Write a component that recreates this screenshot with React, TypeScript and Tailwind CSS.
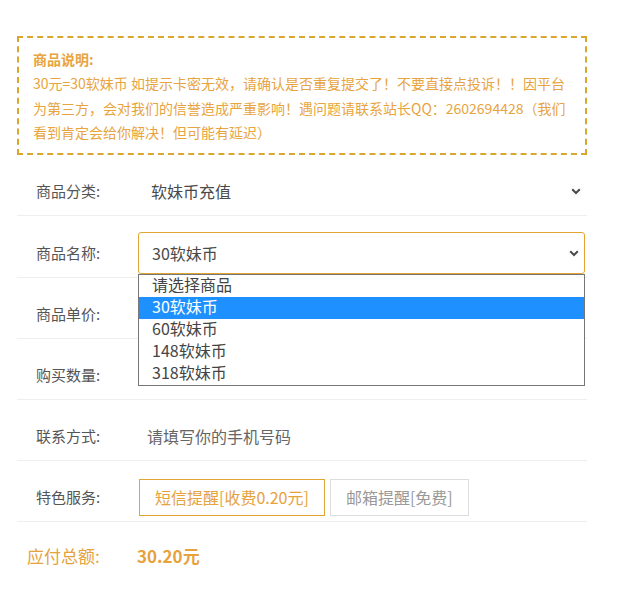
import React from "react";

const FONT = { fontFamily: '"Noto Sans CJK SC", "Noto Sans", sans-serif' };

function Chevron() {
  return (
    <svg width="10" height="7" viewBox="0 0 10 7" className="shrink-0">
      <polyline points="1.2,1.2 5,5 8.8,1.2" fill="none" stroke="#4a4a4a" strokeWidth="2" />
    </svg>
  );
}

function Row({ label, children, extra = "" }: { label: string; children?: React.ReactNode; extra?: string }) {
  return (
    <div className={`flex items-center border-b border-[#eee] pb-[3px] ${extra}`}>
      <div className="w-[121px] shrink-0 pl-[19px] text-[15px] text-[#555] leading-[42px]">{label}</div>
      <div className="relative flex-1 h-[42px] flex items-center">{children}</div>
    </div>
  );
}

export default function App() {
  const items = ["请选择商品", "30软妹币", "60软妹币", "148软妹币", "318软妹币"];
  return (
    <div className="w-[621px] h-[595px] bg-white overflow-hidden" style={FONT}>
      <div className="pt-[36px] pl-[17px] w-[587px]">
        <div className="border-2 border-dashed border-[#d9a62e] pt-[9px] pb-[9px] pl-[14px] pr-[10px] text-[14px] leading-[24.3px] text-[#e8a440]">
          <div className="font-bold">商品说明:</div>
          <div className="whitespace-nowrap">30元=30软妹币 如提示卡密无效，请确认是否重复提交了！不要直接点投诉！！因平台</div>
          <div className="whitespace-nowrap">为第三方，会对我们的信誉造成严重影响！遇问题请联系站长QQ：2602694428（我们</div>
          <div className="whitespace-nowrap">看到肯定会给你解决！但可能有延迟）</div>
        </div>

        <div className="mt-[15px] w-[570px]">
          <Row label="商品分类:">
            <div className="flex w-full items-center justify-between pl-[13px] pr-[6px] text-[16px] text-[#4a4a4a]">
              <span>软妹币充值</span>
              <Chevron />
            </div>
          </Row>
          <Row label="商品名称:" extra="pt-[16px]">
            <div className="flex w-[447px] h-[42px] items-center justify-between rounded-[3px] border border-[#e2a534] pl-[13px] pr-[5px] text-[16px] text-[#4a4a4a]">
              <span>30软妹币</span>
              <Chevron />
            </div>
            <div className="absolute left-0 top-[42px] z-10 w-[447px] border border-[#767676] bg-white">
              {items.map((it, i) => (
                <div
                  key={it}
                  className={`h-[22px] pl-[13px] text-[16px] leading-[19px] ${i === 1 ? "bg-[#1e90ff] text-white" : "text-[#444]"}`}
                >
                  {it}
                </div>
              ))}
            </div>
          </Row>
          <Row label="商品单价:" extra="pt-[15px]" />
          <Row label="购买数量:" extra="pt-[15px]" />
          <Row label="联系方式:" extra="pt-[15px]">
            <span className="pl-[9px] text-[16px] text-[#666]">请填写你的手机号码</span>
          </Row>
          <Row label="特色服务:" extra="pt-[15px]">
            <div className="flex gap-[5px] pl-[1px]">
              <div className="flex h-[37px] items-center border border-[#e2a534] px-[15px] text-[16px] text-[#e6a23c]">短信提醒[收费0.20元]</div>
              <div className="flex h-[37px] items-center border border-[#ddd] px-[15px] text-[16px] text-[#999]">邮箱提醒[免费]</div>
            </div>
          </Row>
          <div className="flex items-center pt-[21px] text-[17px] text-[#e6a23c]">
            <div className="w-[120px] pl-[10px]">应付总额:</div>
            <div className="font-bold">30.20元</div>
          </div>
        </div>
      </div>
    </div>
  );
}
